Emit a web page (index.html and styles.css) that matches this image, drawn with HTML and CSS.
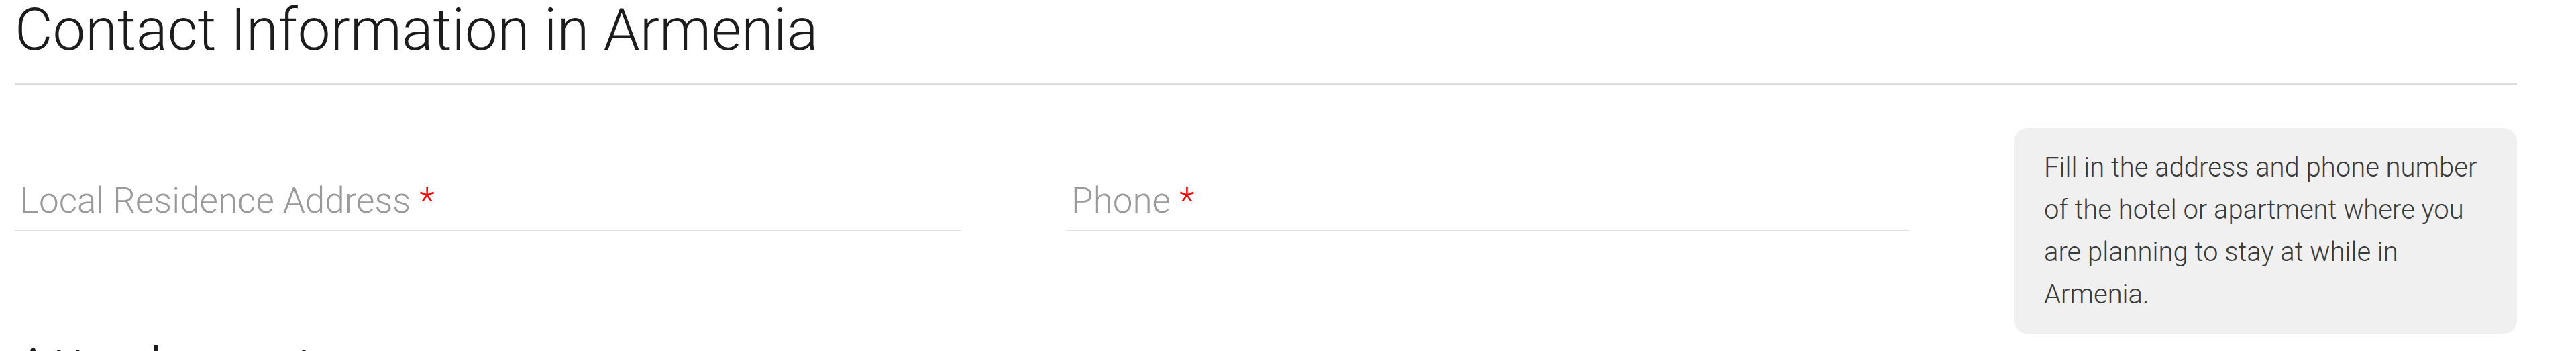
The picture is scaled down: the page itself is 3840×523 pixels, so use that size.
FILE: index.html
```html
<!DOCTYPE html>
<html lang="en">
<head>
<meta charset="utf-8">
<title>Contact Information in Armenia</title>
<link rel="stylesheet" href="styles.css">
</head>
<body>
<main class="page">
  <section class="section">
    <header class="section-head">
      <h2 class="section-title">Contact Information in Armenia</h2>
    </header>
    <div class="row">
      <div class="field">
        <label class="field-label">Local Residence Address <span class="req">*</span></label>
      </div>
      <div class="field">
        <label class="field-label">Phone <span class="req">*</span></label>
      </div>
      <aside class="note">Fill in the address and phone number of the hotel or apartment where you are planning to stay at while in Armenia.</aside>
    </div>
  </section>
  <section class="section next">
    <header class="section-head">
      <h2 class="section-title">Attachments</h2>
    </header>
  </section>
</main>
</body>
</html>
```
FILE: styles.css
```css
html, body {
  margin: 0;
  padding: 0;
  background: #ffffff;
}

body {
  font-family: Roboto, "Noto Sans", "Liberation Sans", sans-serif;
  overflow: hidden;
}

.page {
  padding: 0 88px 0 22px;
}

.section-head {
  padding-bottom: 36px;
  border-bottom: 2px solid #dddddd;
}

.section-title {
  margin: 0;
  font-weight: 300;
  font-size: 87px;
  line-height: 88px;
  color: #1c1c1c;
}

.row {
  display: grid;
  grid-template-columns: 1411px 1257px 750px;
  column-gap: 156px;
  align-items: start;
  margin-top: 65px;
}

.field {
  padding: 77px 0 12px 8px;
  border-bottom: 2px solid #e2e2e2;
}

.field-label {
  display: block;
  font-weight: 300;
  font-size: 53px;
  line-height: 62px;
  color: #9a9a9a;
}

.req {
  color: #ff0000;
}

.note {
  background: #f0f0f0;
  border-radius: 20px;
  padding: 27px 30px 27px 45px;
  font-weight: 300;
  font-size: 40px;
  line-height: 63px;
  color: #3a3a3a;
}

.next {
  margin-top: 9px;
}
```
